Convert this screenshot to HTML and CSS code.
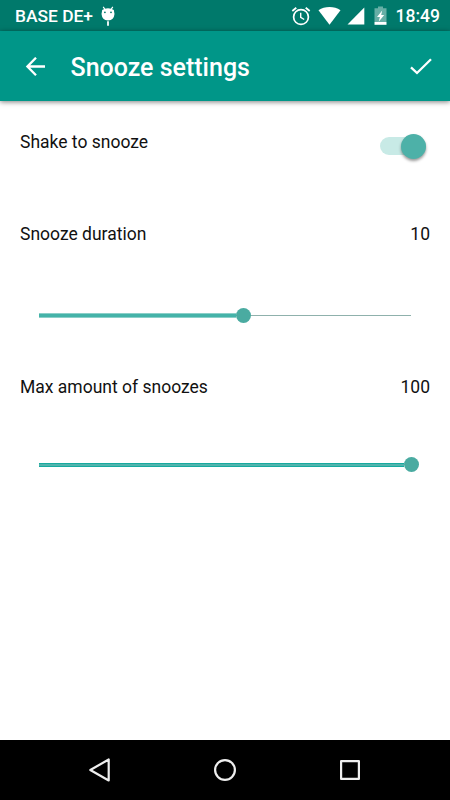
FILE: index.html
```html
<!DOCTYPE html>
<html lang="en">
<head>
<meta charset="utf-8">
<title>Snooze settings</title>
<link rel="stylesheet" href="styles.css">
</head>
<body>
<div class="screen">
  <div class="status">
    <span class="carrier">BASE DE+</span>
    <svg class="bug" width="14" height="20" viewBox="0 0 14 20">
      <path d="M2.2.8 4 3.5M11.8.8 10 3.5" stroke="#fff" stroke-width="1.2"/>
      <path d="M1.200 4Q3.500 2.200 7 2.200T12.800 4L13.500 8Q13 14 7 14.500Q1 14 .5 8Z" fill="#fff"/>
      <circle cx="3.9" cy="6.3" r=".9" fill="#00796b"/><circle cx="10" cy="6.3" r=".9" fill="#00796b"/>
      <path d="M7 15.200V19.700" stroke="#fff" stroke-width="1.800"/>
    </svg>
    <svg class="alarm" width="20" height="20" viewBox="0 0 20 20" fill="none" stroke="#fff">
      <circle cx="10" cy="11" r="7.4" stroke-width="1.7"/>
      <path d="M1.3 5 5.3 1.7M18.7 5 14.7 1.7" stroke-width="1.8"/>
      <path d="M9.7 6.7V11.4L13.2 13.5" stroke-width="1.4"/>
    </svg>
    <svg class="wifi" width="23" height="20" viewBox="0 0 23 20"><path d="M.5 4.2Q5.3 1 11.5 1T22.500 4.200L11.500 18.700Z" fill="#fff"/></svg>
    <svg class="signal" width="18" height="20" viewBox="0 0 18 20"><path d="M.5 18.500 17.300 1.500V18.500Z" fill="#fff"/></svg>
    <svg class="battery" width="13" height="20" viewBox="0 0 13 20">
      <path d="M.5 2.200H4V.5H9V2.200H12.500V16H.5Z" fill="#66afa6"/>
      <path d="M.5 16H12.500V18.800H.5Z" fill="#fff"/>
      <path d="M8.200 4.500 3 11H5.900L4.700 15.700 10.200 9H7.200Z" fill="#fff"/>
    </svg>
    <span class="clock">18:49</span>
  </div>
  <header class="appbar">
    <svg class="back" width="20" height="20" viewBox="0 0 20 20" fill="none" stroke="#fff" stroke-width="2.300"><path d="M20 9.500H2.600M11 .7 2.400 9.500 11 18.300"/></svg>
    <h1 class="title">Snooze settings</h1>
    <svg class="check" width="22" height="17" viewBox="0 0 22 17" fill="none" stroke="#fff" stroke-width="2.300"><path d="M1 9.300 7 15 21 1.300"/></svg>
  </header>
  <main class="content">
    <div class="row">
      <span>Shake to snooze</span>
      <span class="switch"><span class="knob"></span></span>
    </div>
    <div class="row duration"><span>Snooze duration</span><span>10</span></div>
    <div class="slider first"><span class="fill"></span><span class="thumb"></span><span class="rest"></span></div>
    <div class="row amount"><span>Max amount of snoozes</span><span>100</span></div>
    <div class="slider second"><span class="fill"></span><span class="thumb"></span></div>
  </main>
  <nav class="navbar">
    <svg width="24" height="26" viewBox="0 0 24 26" fill="none" stroke="#eee" stroke-width="2.200" stroke-linejoin="round"><path d="M20.700 2.500V23.500L2.300 13Z"/></svg>
    <svg width="24" height="26" viewBox="0 0 24 26" fill="none" stroke="#eee" stroke-width="2.200"><circle cx="12" cy="13" r="9.900"/></svg>
    <svg width="24" height="26" viewBox="0 0 24 26" fill="none" stroke="#eee" stroke-width="2.200" stroke-linejoin="round"><path d="M3.100 4.100H20.900V21.900H3.100Z"/></svg>
  </nav>
</div>
</body>
</html>
```
FILE: styles.css
```css
* { box-sizing: border-box; }
body { margin: 0; background: #fff; font-family: Roboto, sans-serif; }
svg { display: block; flex: none; }
.screen { width: 450px; height: 800px; display: flex; flex-direction: column; }
.status {
  height: 31px;
  flex: none;
  display: flex;
  align-items: center;
  padding: 1px 10px 0 15px;
  background: #00796b;
  color: #fff;
  font-size: 17.5px;
  font-weight: 500;
  white-space: nowrap;
}
.carrier { width: 79px; font-size: 17.4px; }
.bug { margin-left: 7px; }
.alarm { margin-left: auto; }
.wifi { margin-left: 7px; }
.signal { margin-left: 6px; }
.battery { margin-left: 9px; }
.clock { width: 45px; margin-left: 8px; text-align: right; }
.appbar {
  height: 70px;
  flex: none;
  display: flex;
  align-items: center;
  padding: 1px 18px 0 25px;
  background: #009688;
  color: #fff;
  box-shadow: 0 1px 5px rgba(0, 0, 0, .5);
}
.title { margin: 2px 0 0 25.5px; font-size: 25px; font-weight: 500; line-height: 30px; white-space: nowrap; }
.check { margin-left: auto; }
.content { flex: 1; padding: 30px 20px 0; color: #111; font-size: 17.5px; line-height: 22px; }
.row { height: 22px; display: flex; justify-content: space-between; }
.duration { margin-top: 70px; }
.amount { margin-top: 53px; }
.switch {
  width: 46px;
  height: 18px;
  margin: 6px 4.5px 0 0;
  display: flex;
  align-items: center;
  justify-content: flex-end;
  border-radius: 9px;
  background: #c8eae6;
}
.knob { width: 25px; height: 25px; flex: none; border-radius: 50%; background: #4db1a8; box-shadow: 0 2px 3px rgba(0, 0, 0, .4); }
.slider { width: 380px; height: 15px; margin-left: 19px; display: flex; align-items: center; }
.first { margin-top: 63px; }
.second { margin-top: 59px; }
.thumb { width: 15px; height: 15px; flex: none; border-radius: 50%; background: #4aaba1; }
.first .fill { width: 197px; height: 5px; background: #45b3a9; border: solid #8bcfc8; border-width: 1px 0; }
.rest { width: 160px; height: 1px; background: #8fb1ac; }
.second .fill { width: 365px; height: 4px; background: #52b4ad; border: solid #17aa9f; border-width: 1px 0; }
.navbar { height: 60px; flex: none; display: flex; justify-content: space-between; align-items: center; padding: 0 88px; background: #000; }
```
